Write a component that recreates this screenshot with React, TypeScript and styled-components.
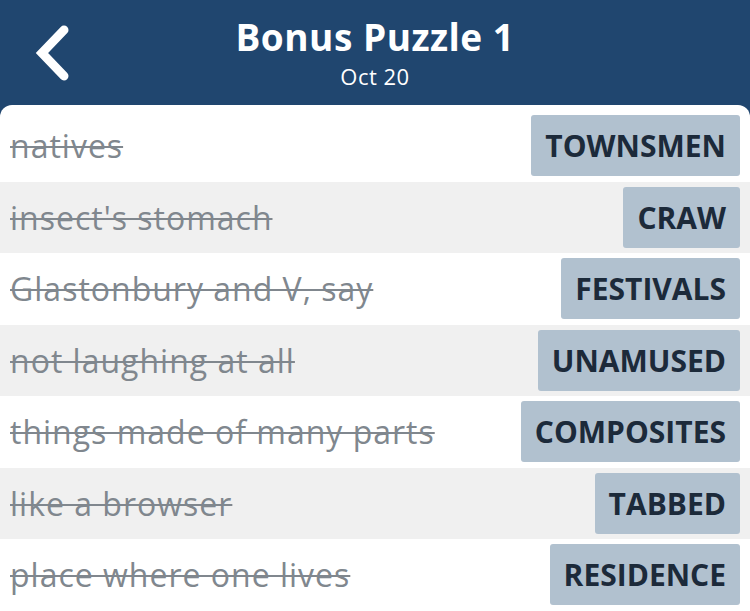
import React from 'react';
import styled, { createGlobalStyle } from 'styled-components';

const GlobalStyle = createGlobalStyle`
  html, body {
    margin: 0;
    padding: 0;
    background: #ffffff;
  }
  body {
    font-family: "Open Sans", "Noto Sans", sans-serif;
    overflow: hidden;
  }
`;

const Page = styled.div`
  width: 750px;
  height: 611px;
  background: #20466f;
  display: flex;
  flex-direction: column;
`;

const Header = styled.header`
  height: 105px;
  flex-shrink: 0;
  display: flex;
  align-items: center;
  justify-content: center;
  position: relative;
  color: #ffffff;
`;

const BackButton = styled.button`
  position: absolute;
  left: 30px;
  top: 24px;
  width: 44px;
  height: 58px;
  padding: 0;
  border: none;
  background: transparent;
  cursor: pointer;
`;

const TitleBlock = styled.div`
  display: flex;
  flex-direction: column;
  align-items: center;
  margin-top: -4px;
`;

const Title = styled.h1`
  margin: 2px 0 0;
  font-size: 37px;
  font-weight: 700;
  line-height: 46px;
  letter-spacing: 0.5px;
`;

const Subtitle = styled.div`
  font-size: 22px;
  line-height: 26px;
  margin-top: 3px;
  letter-spacing: 0.5px;
`;

const Card = styled.main`
  flex: 1;
  background: #ffffff;
  border-radius: 12px 12px 0 0;
  padding-top: 5px;
  display: flex;
  flex-direction: column;
`;

const Row = styled.div<{ $shaded: boolean }>`
  height: 71.5px;
  flex-shrink: 0;
  display: flex;
  align-items: center;
  justify-content: space-between;
  padding: 0 10px;
  background: ${({ $shaded }) => ($shaded ? '#f0f0f0' : 'transparent')};
`;

const Clue = styled.span`
  color: #80878e;
  font-size: 32px;
  letter-spacing: 1px;
  text-decoration: line-through;
  text-decoration-thickness: 2px;
`;

const Answer = styled.div`
  height: 61px;
  padding: 0 14px;
  display: flex;
  align-items: center;
  background: #b1c1cf;
  border-radius: 3px;
  color: #1c2a3a;
  font-size: 30px;
  font-weight: 700;
`;

const rows = [
  { clue: 'natives', answer: 'TOWNSMEN' },
  { clue: "insect's stomach", answer: 'CRAW' },
  { clue: 'Glastonbury and V, say', answer: 'FESTIVALS' },
  { clue: 'not laughing at all', answer: 'UNAMUSED' },
  { clue: 'things made of many parts', answer: 'COMPOSITES' },
  { clue: 'like a browser', answer: 'TABBED' },
  { clue: 'place where one lives', answer: 'RESIDENCE' },
];

const App = () => (
  <>
    <GlobalStyle />
    <Page>
      <Header>
        <BackButton aria-label="Back">
          <svg width="44" height="58" viewBox="0 0 44 58">
            <polyline
              points="34,6 12,29 34,52"
              fill="none"
              stroke="#ffffff"
              strokeWidth="9"
              strokeLinecap="round"
              strokeLinejoin="miter"
            />
          </svg>
        </BackButton>
        <TitleBlock>
          <Title>Bonus Puzzle 1</Title>
          <Subtitle>Oct 20</Subtitle>
        </TitleBlock>
      </Header>
      <Card>
        {rows.map((r, i) => (
          <Row key={r.answer} $shaded={i % 2 === 1}>
            <Clue>{r.clue}</Clue>
            <Answer>{r.answer}</Answer>
          </Row>
        ))}
      </Card>
    </Page>
  </>
);

export default App;
